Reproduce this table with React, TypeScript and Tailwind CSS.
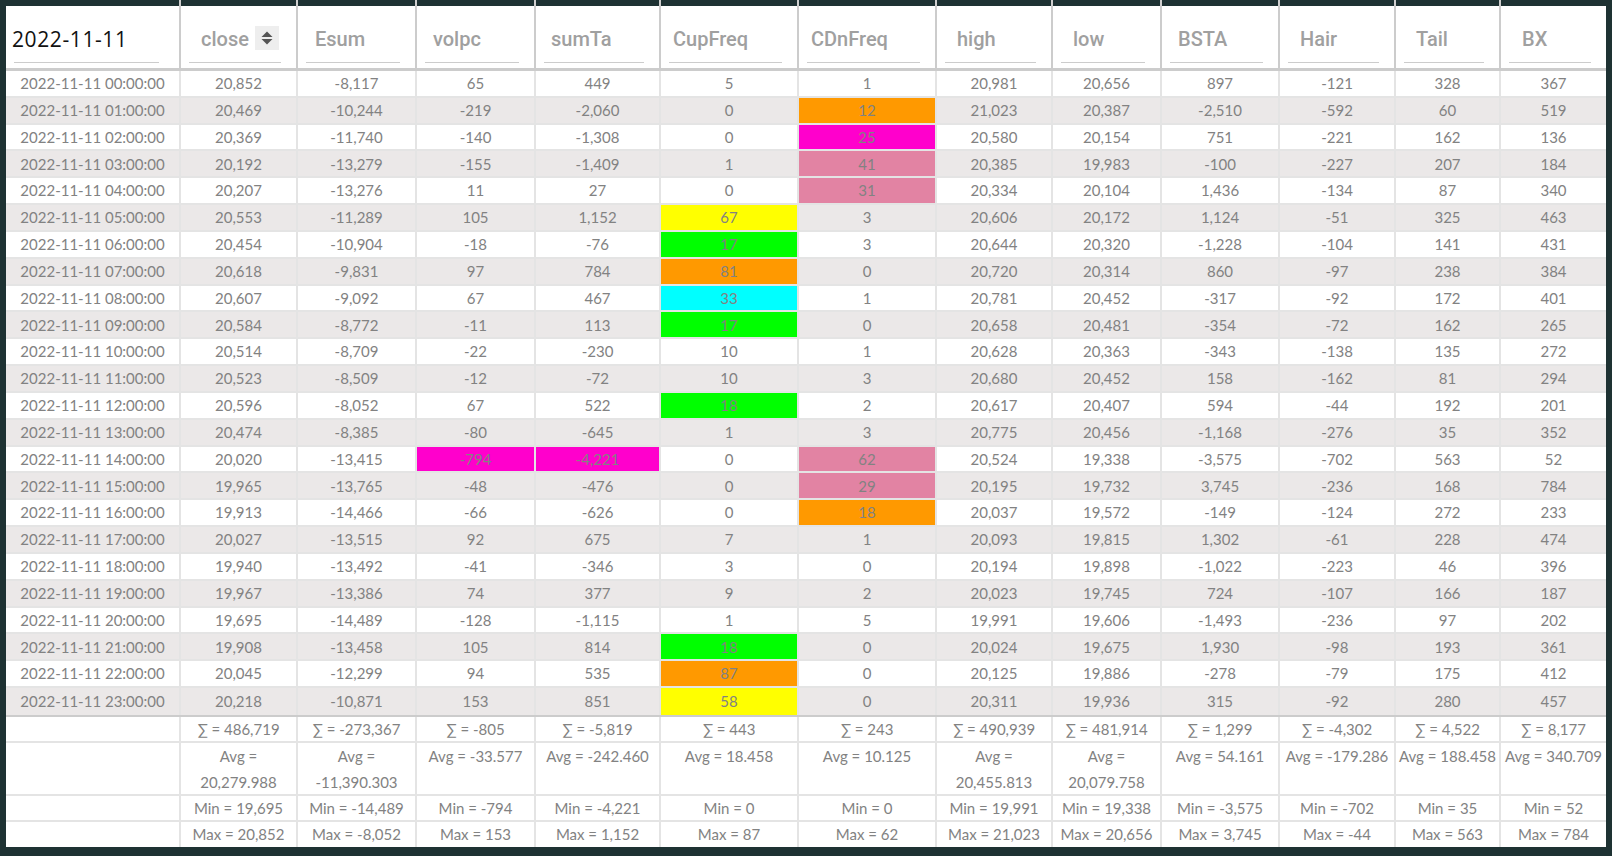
import React from "react";

const COLS =
  "grid grid-cols-[175px_117px_119px_119px_125px_138px_138px_116px_109px_118px_116px_105px_105px]";

const BG: Record<string, string> = {
  o: "bg-[#ff9900]",
  m: "bg-[#ff00cc]",
  p: "bg-[#e283a3]",
  y: "bg-[#ffff00]",
  g: "bg-[#00ff00]",
  c: "bg-[#00ffff]",
};

const HEADERS: { label: string; pl: string }[] = [
  { label: "close", pl: "pl-[12px]" },
  { label: "Esum", pl: "pl-[9px]" },
  { label: "volpc", pl: "pl-[8px]" },
  { label: "sumTa", pl: "pl-[7px]" },
  { label: "CupFreq", pl: "pl-[4px]" },
  { label: "CDnFreq", pl: "pl-[4px]" },
  { label: "high", pl: "pl-[12px]" },
  { label: "low", pl: "pl-[12px]" },
  { label: "BSTA", pl: "pl-[8px]" },
  { label: "Hair", pl: "pl-[12px]" },
  { label: "Tail", pl: "pl-[12px]" },
  { label: "BX", pl: "pl-[13px]" },
];

const RAW: string[] = [
  "00|20,852|-8,117|65|449|5|1|20,981|20,656|897|-121|328|367",
  "01|20,469|-10,244|-219|-2,060|0|12:o|21,023|20,387|-2,510|-592|60|519",
  "02|20,369|-11,740|-140|-1,308|0|25:m|20,580|20,154|751|-221|162|136",
  "03|20,192|-13,279|-155|-1,409|1|41:p|20,385|19,983|-100|-227|207|184",
  "04|20,207|-13,276|11|27|0|31:p|20,334|20,104|1,436|-134|87|340",
  "05|20,553|-11,289|105|1,152|67:y|3|20,606|20,172|1,124|-51|325|463",
  "06|20,454|-10,904|-18|-76|17:g|3|20,644|20,320|-1,228|-104|141|431",
  "07|20,618|-9,831|97|784|81:o|0|20,720|20,314|860|-97|238|384",
  "08|20,607|-9,092|67|467|33:c|1|20,781|20,452|-317|-92|172|401",
  "09|20,584|-8,772|-11|113|17:g|0|20,658|20,481|-354|-72|162|265",
  "10|20,514|-8,709|-22|-230|10|1|20,628|20,363|-343|-138|135|272",
  "11|20,523|-8,509|-12|-72|10|3|20,680|20,452|158|-162|81|294",
  "12|20,596|-8,052|67|522|18:g|2|20,617|20,407|594|-44|192|201",
  "13|20,474|-8,385|-80|-645|1|3|20,775|20,456|-1,168|-276|35|352",
  "14|20,020|-13,415|-794:m|-4,221:m|0|62:p|20,524|19,338|-3,575|-702|563|52",
  "15|19,965|-13,765|-48|-476|0|29:p|20,195|19,732|3,745|-236|168|784",
  "16|19,913|-14,466|-66|-626|0|18:o|20,037|19,572|-149|-124|272|233",
  "17|20,027|-13,515|92|675|7|1|20,093|19,815|1,302|-61|228|474",
  "18|19,940|-13,492|-41|-346|3|0|20,194|19,898|-1,022|-223|46|396",
  "19|19,967|-13,386|74|377|9|2|20,023|19,745|724|-107|166|187",
  "20|19,695|-14,489|-128|-1,115|1|5|19,991|19,606|-1,493|-236|97|202",
  "21|19,908|-13,458|105|814|18:g|0|20,024|19,675|1,930|-98|193|361",
  "22|20,045|-12,299|94|535|87:o|0|20,125|19,886|-278|-79|175|412",
  "23|20,218|-10,871|153|851|58:y|0|20,311|19,936|315|-92|280|457",
];

const SUM = "486,719|-273,367|-805|-5,819|443|243|490,939|481,914|1,299|-4,302|4,522|8,177".split("|");
const AVG = "20,279.988|-11,390.303|-33.577|-242.460|18.458|10.125|20,455.813|20,079.758|54.161|-179.286|188.458|340.709".split("|");
const MIN = "19,695|-14,489|-794|-4,221|0|0|19,991|19,338|-3,575|-702|35|52".split("|");
const MAX = "20,852|-8,052|153|1,152|87|62|21,023|20,656|3,745|-44|563|784".split("|");

function SortIcon() {
  return (
    <div className="ml-auto mr-[2px] flex h-[24px] w-[24px] items-center justify-center bg-[#eeeeee]">
      <svg width="24" height="24" viewBox="0 0 24 24">
        <path d="M6.5 11 L12 5.5 L17.5 11 Z" fill="#555" />
        <path d="M6.5 13 L17.5 13 L12 18.5 Z" fill="#555" />
      </svg>
    </div>
  );
}

export default function App() {
  return (
    <div
      className="h-[856px] w-[1612px] overflow-hidden bg-[#1e3233] pl-[6px] pr-[6px] pb-[9px]"
      style={{ fontFamily: "Lato, 'Noto Sans', sans-serif" }}
    >
      {/* scrolled top strip showing column lines */}
      <div className={`${COLS} h-[6px]`}>
        {Array.from({ length: 13 }).map((_, i) => (
          <div key={i} className={i < 12 ? "border-r-2 border-[#cfcfcf]" : ""} />
        ))}
      </div>

      {/* header */}
      <div className={`${COLS} border-b-[3px] border-[#cccccc] bg-white`}>
        <div className="h-[62px] border-r-2 border-[#cccccc] pt-[20px] pb-[5px] pl-[8px] pr-[20px]">
          <div className="h-[37px] border-b border-[#cccccc]">
            <span
              className="ml-[-2px] block text-[21px] font-medium leading-[26px] tracking-[0.6px] text-[#111111]"
              style={{ fontFamily: "'Open Sans', 'Noto Sans', sans-serif" }}
            >
              2022-11-11
            </span>
          </div>
        </div>
        {HEADERS.map((h, i) => (
          <div
            key={h.label}
            className={`h-[62px] pt-[20px] pb-[5px] pl-[8px] pr-[15px] ${i < 11 ? "border-r-2 border-[#cccccc]" : ""}`}
          >
            <div className="flex h-[37px] items-start border-b border-[#cccccc]">
              <span
                className={`${h.pl} text-[20px] font-medium leading-[26px] text-[#a0a0a0]`}
                style={{ fontFamily: "Roboto, 'Liberation Sans', sans-serif" }}
              >
                {h.label}
              </span>
              {i === 0 && <SortIcon />}
            </div>
          </div>
        ))}
      </div>

      {/* body */}
      <div className="border-b-2 border-[#cccccc]">
        {RAW.map((line, r) => {
          const parts = line.split("|");
          const hour = parts[0];
          const vals = parts.slice(1);
          const rowBg = r % 2 === 1 ? "bg-[#ebe8e8]" : "bg-white";
          return (
            <div
              key={hour}
              className={`${COLS} h-[26.8333px] ${rowBg} ${r < 23 ? "border-b-2 border-[#e4e4e4]" : ""}`}
            >
              <div className="flex items-center justify-center border-r-2 border-[#e4e4e4] text-[15px] text-[#828282]">
                2022-11-11 {hour}:00:00
              </div>
              {vals.map((v, i) => {
                const [text, color] = v.split(":");
                return (
                  <div
                    key={i}
                    className={`flex items-center justify-center text-[15px] text-[#828282] ${i < 11 ? "border-r-2 border-[#e4e4e4]" : ""} ${color ? BG[color] : ""}`}
                  >
                    {text}
                  </div>
                );
              })}
            </div>
          );
        })}
      </div>

      {/* footer */}
      <div className="bg-white text-[15px] text-[#828282]">
        <div className={`${COLS} h-[26px] border-b-2 border-[#e4e4e4]`}>
          <div className="border-r-2 border-[#e4e4e4]" />
          {SUM.map((v, i) => (
            <div
              key={i}
              className={`text-center leading-[24px] ${i < 11 ? "border-r-2 border-[#e4e4e4]" : ""}`}
            >
              ∑ = {v}
            </div>
          ))}
        </div>
        <div className={`${COLS} h-[53px] border-b-2 border-[#e4e4e4]`}>
          <div className="border-r-2 border-[#e4e4e4]" />
          {AVG.map((v, i) => (
            <div
              key={i}
              className={`text-center leading-[26px] ${i < 11 ? "border-r-2 border-[#e4e4e4]" : ""}`}
            >
              {v.length >= 10 ? (
                <>
                  <span className="block">Avg =</span>
                  <span className="block">{v}</span>
                </>
              ) : (
                <span>Avg = {v}</span>
              )}
            </div>
          ))}
        </div>
        <div className={`${COLS} h-[26px] border-b-2 border-[#e4e4e4]`}>
          <div className="border-r-2 border-[#e4e4e4]" />
          {MIN.map((v, i) => (
            <div
              key={i}
              className={`text-center leading-[24px] ${i < 11 ? "border-r-2 border-[#e4e4e4]" : ""}`}
            >
              Min = {v}
            </div>
          ))}
        </div>
        <div className={`${COLS} h-[25px]`}>
          <div className="border-r-2 border-[#e4e4e4]" />
          {MAX.map((v, i) => (
            <div
              key={i}
              className={`text-center leading-[25px] ${i < 11 ? "border-r-2 border-[#e4e4e4]" : ""}`}
            >
              Max = {v}
            </div>
          ))}
        </div>
      </div>
    </div>
  );
}
